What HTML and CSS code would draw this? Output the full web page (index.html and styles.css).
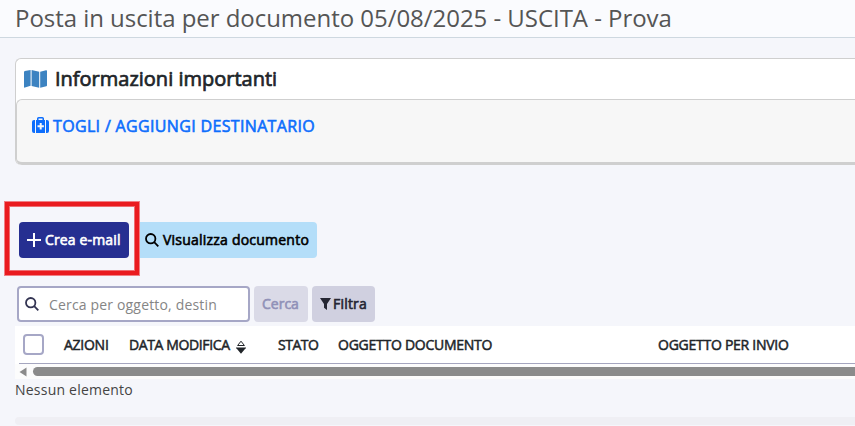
FILE: index.html
```html
<!DOCTYPE html>
<html lang="it">

<head>
  <meta charset="UTF-8">
  <meta name="viewport" content="width=device-width, initial-scale=1.0">
  <title>Posta in uscita</title>
  <link rel="stylesheet" href="styles.css">
</head>

<body>
  <header class="page-header">
    <h1>Posta in uscita per documento 05/08/2025 - USCITA - Prova</h1>
  </header>

  <main class="content">
    <section class="card">
      <div class="card-header">
        <svg class="icon-map" viewBox="0 0 23 18">
          <path d="M0 2.2Q0 1.4 .8 1.1L6.6 0V15.8L1 17.6Q0 18 0 17ZM7.6 0 15.2 1.8V17.8L7.6 16ZM16.2 1.8 22 0.2Q23 0 23 1V15.2Q23 16 22.3 16.3L16.2 17.8Z" />
        </svg>
        <h2>Informazioni importanti</h2>
      </div>
      <div class="card-body">
        <a class="card-link" href="#">
          <svg class="icon-case" viewBox="0 0 17 16">
            <path d="M5 3V1.6Q5 0 6.6 0H10.4Q12 0 12 1.6V3H13V16H4V3ZM6.5 3H10.5V1.5H6.5ZM7.7 6V8.2H5.5V10.2H7.7V12.4H9.7V10.2H11.9V8.2H9.7V6ZM3 3V16H2Q0 16 0 14V5Q0 3 2 3ZM14 3H15Q17 3 17 5V14Q17 16 15 16H14Z" fill-rule="evenodd" />
          </svg>
          <span>TOGLI / AGGIUNGI DESTINATARIO</span>
        </a>
      </div>
    </section>

    <div class="actions">
      <div class="highlight">
        <button class="btn btn-primary">
          <svg class="icon-plus" viewBox="0 0 14 14">
            <path d="M7 0V14M0 7H14" />
          </svg>
          <span>Crea e-mail</span>
        </button>
      </div>
      <button class="btn btn-info">
        <svg class="icon-search" viewBox="0 0 14 14">
          <circle cx="5.7" cy="5.7" r="4.7" />
          <path d="M9.2 9.2 13.3 13.3" />
        </svg>
        <span>Visualizza documento</span>
      </button>
    </div>

    <div class="filters">
      <label class="search-box">
        <svg class="icon-search" viewBox="0 0 14 14">
          <circle cx="5.7" cy="5.7" r="4.7" />
          <path d="M9.2 9.2 13.3 13.3" />
        </svg>
        <input type="text" placeholder="Cerca per oggetto, destin">
      </label>
      <button class="btn btn-search">Cerca</button>
      <button class="btn btn-filter">
        <svg class="icon-filter" viewBox="0 0 11 12">
          <path d="M0 0H11L7 6V12L4 9.8V6Z" />
        </svg>
        <span>Filtra</span>
      </button>
    </div>

    <div class="table-wrap">
      <div class="table-head">
        <div class="col-check"><span class="checkbox"></span></div>
        <div class="col-actions">AZIONI</div>
        <div class="col-date">
          <span>DATA MODIFICA</span>
          <svg class="icon-sort" viewBox="0 0 10 14">
            <path class="sort-up" d="M5 1.2 8.4 5.5H1.6Z" />
            <path class="sort-down" d="M0 7.5H10V8.5H9.4L5 13.8 0.6 8.5H0Z" />
          </svg>
        </div>
        <div class="col-state">STATO</div>
        <div class="col-doc">OGGETTO DOCUMENTO</div>
        <div class="col-mail">OGGETTO PER INVIO</div>
      </div>
      <div class="scrollbar">
        <svg class="scroll-arrow" viewBox="0 0 8 10">
          <path d="M7.5 0.5V9.5L0.5 5Z" />
        </svg>
        <div class="scroll-thumb"></div>
      </div>
    </div>

    <p class="empty">Nessun elemento</p>
    <div class="footer-bar"></div>
  </main>
</body>

</html>
```
FILE: styles.css
```css
* {
  box-sizing: border-box;
}

body {
  margin: 0;
  height: 426px;
  overflow: hidden;
  background-color: #f5f6fb;
  font-family: "Open Sans", sans-serif;
  font-size: 14px;
  color: #212529;
}

svg {
  display: block;
  flex: none;
  fill: currentColor;
}

button {
  font-family: inherit;
}

.page-header {
  height: 38px;
  padding-left: 15px;
  background-color: #fafbfe;
  border-bottom: 1px solid #ced8e0;
}

.page-header h1 {
  margin: 0;
  font-size: 24px;
  font-weight: 400;
  line-height: 36px;
  letter-spacing: -0.04px;
  white-space: nowrap;
  color: #555;
}

.content {
  padding: 20px 0 0 15px;
}

.card {
  height: 107px;
  background-color: #fff;
  border: 1px solid #cfcfcf;
  border-right: 0;
  border-bottom: 0;
  border-radius: 6px 0 0 6px;
}

.card-header {
  display: flex;
  align-items: center;
  gap: 8px;
  height: 40px;
  padding-left: 8px;
}

.card-header h2 {
  margin: 0;
  font-size: 20px;
  font-weight: 400;
  line-height: 40px;
  -webkit-text-stroke: 0.7px;
}

.icon-map {
  width: 23px;
  height: 18px;
  color: #3c83c1;
}

.card-body {
  height: 66px;
  padding: 16px 0 0 15px;
  background-color: #f7f7f7;
  border: 1px solid #cfcfcf;
  border-right: 0;
  border-bottom: 3px solid #cfcfcf;
  border-radius: 6px 0 0 6px;
}

.card-link {
  display: flex;
  align-items: center;
  gap: 4px;
  font-size: 16px;
  line-height: 20px;
  letter-spacing: 0.34px;
  color: #0d6efd;
  text-decoration: none;
  -webkit-text-stroke: 0.6px;
}

.icon-case {
  width: 17px;
  height: 16px;
  margin-top: -2px;
}

.actions {
  display: flex;
  align-items: flex-start;
  height: 73px;
  margin: 37px 0 0 -10px;
}

/* red frame around the main action */
.highlight {
  position: relative;
  z-index: 1;
  width: 134px;
  height: 73px;
  padding: 16px 0 0 10px;
  border: 4px solid #ea1b1f;
  box-shadow: 0 0 0 1px #f07f84, inset 0 0 0 1px #ee6d71;
}

.btn {
  display: flex;
  align-items: center;
  height: 36px;
  padding: 0 8px;
  border: 0;
  border-radius: 4px;
  font-size: 14px;
  line-height: 20px;
  white-space: nowrap;
  -webkit-text-stroke: 0.6px;
}

.btn span {
  margin-top: -1px;
}

.btn-primary {
  width: 110px;
  gap: 4px;
  background-color: #262f91;
  color: #fff;
  letter-spacing: 0.15px;
}

.btn-info {
  width: 182px;
  margin: 20px 0 0 -4px;
  padding-left: 10px;
  gap: 4px;
  background-color: #b4def9;
  color: #000;
  letter-spacing: 0.22px;
}

.icon-plus {
  width: 14px;
  height: 14px;
  stroke: currentColor;
  stroke-width: 2;
}

.icon-search {
  width: 14px;
  height: 14px;
  fill: none;
  stroke: currentColor;
  stroke-width: 1.8;
}

.filters {
  display: flex;
  gap: 4px;
  margin: 11px 0 0 2px;
}

.search-box {
  display: flex;
  align-items: center;
  gap: 10px;
  width: 233px;
  height: 36px;
  padding-left: 6px;
  background-color: #fff;
  border: 2px solid #a6a7c6;
  border-radius: 4px;
  color: #333452;
}

.search-box input {
  width: 180px;
  padding: 0;
  border: 0;
  outline: 0;
  background: none;
  font-family: inherit;
  font-size: 14px;
  letter-spacing: 0.17px;
}

.search-box input::placeholder {
  color: #858585;
}

.btn-search {
  width: 54px;
  background-color: #dadae7;
  color: #9091b8;
}

.btn-filter {
  width: 63px;
  gap: 2px;
  background-color: #d0d0e0;
  color: #252633;
  letter-spacing: 0.2px;
}

.icon-filter {
  width: 11px;
  height: 12px;
}

.table-wrap {
  height: 53px;
  margin-top: 4px;
  background-color: #fff;
}

.table-head {
  display: grid;
  grid-template-columns: 45px 65px 149px 60px 320px 1fr;
  align-items: center;
  height: 38px;
  margin-left: 4px;
  border-bottom: 1px solid #a5a6bf;
  font-size: 14px;
  letter-spacing: -0.26px;
  white-space: nowrap;
  -webkit-text-stroke: 0.5px;
}

.col-check {
  padding-left: 4px;
}

.checkbox {
  display: block;
  width: 21px;
  height: 21px;
  border: 2px solid #a6a7c6;
  border-radius: 4px;
}

.col-date {
  display: flex;
  align-items: center;
  gap: 6px;
  letter-spacing: -0.38px;
}

.col-state {
  letter-spacing: -0.5px;
}

.icon-sort {
  width: 10px;
  height: 14px;
  margin-top: 4px;
}

.sort-up {
  fill: none;
  stroke: currentColor;
}

.scrollbar {
  display: flex;
  align-items: center;
  height: 15px;
  padding-left: 4px;
  gap: 6px;
  background-color: #fcfcfc;
}

.scroll-arrow {
  width: 8px;
  height: 10px;
  color: #8b8b8b;
}

.scroll-thumb {
  flex: 1;
  height: 9px;
  background-color: #8b8b8b;
  border-radius: 5px 0 0 5px;
}

.empty {
  margin: 1px 0 0;
  line-height: 20px;
  letter-spacing: 0.22px;
  color: #444;
}

.footer-bar {
  height: 8px;
  margin-top: 17px;
  background-color: #efeff4;
  border-radius: 4px 0 0 4px;
}
```
